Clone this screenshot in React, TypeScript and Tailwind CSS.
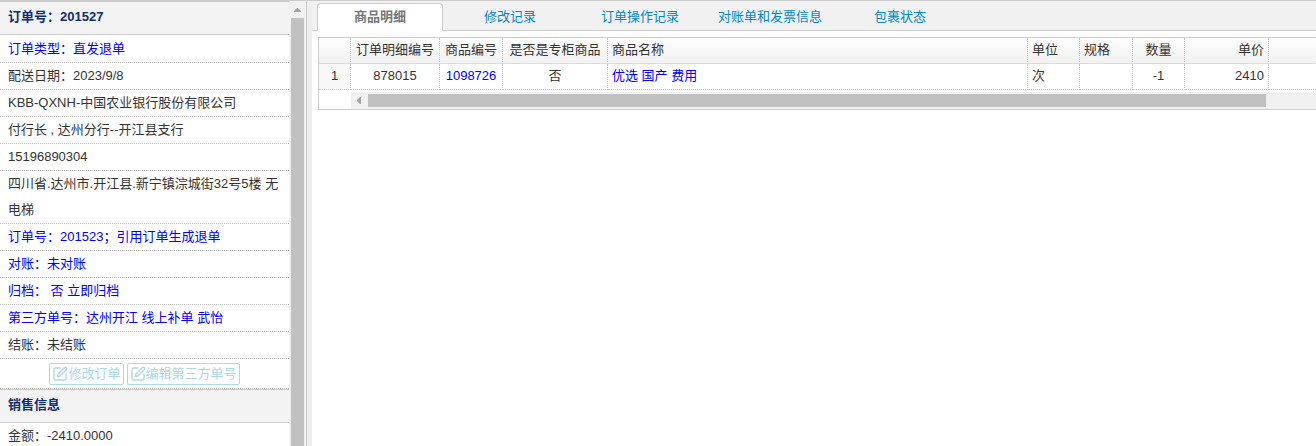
import type { ReactNode } from "react";
import { SquarePen } from "lucide-react";

interface InfoRow {
    text: string;
    link?: boolean;
}

interface OrderItem {
    id: string;
    productCode: string;
    counter: string;
    name: string;
    unit: string;
    spec: string;
    quantity: number;
    price: number;
}

const infoRows: InfoRow[] = [
    { text: "订单类型：直发退单", link: true },
    { text: "配送日期：2023/9/8" },
    { text: "KBB-QXNH-中国农业银行股份有限公司" },
    { text: "付行长 , 达州分行--开江县支行" },
    { text: "15196890304" },
    { text: "四川省.达州市.开江县.新宁镇淙城街32号5楼 无电梯" },
    { text: "订单号：201523；引用订单生成退单", link: true },
    { text: "对账：未对账", link: true },
    { text: "归档： 否 立即归档", link: true },
    { text: "第三方单号：达州开江 线上补单 武怡", link: true },
    { text: "结账：未结账" },
];

const tabs = ["商品明细", "修改记录", "订单操作记录", "对账单和发票信息", "包裹状态"];

const items: OrderItem[] = [
    {
        id: "878015",
        productCode: "1098726",
        counter: "否",
        name: "优选 国产 费用",
        unit: "次",
        spec: "",
        quantity: -1,
        price: 2410,
    },
];

const PanelTitle = ({ children }: { children: ReactNode }) => (
    <h2 className="border-y border-[#ccc] bg-[#f3f3f3] px-2 pt-px pb-[3px] font-bold leading-7 text-[#0e2d70]">
        {children}
    </h2>
);

const ActionButton = ({ children }: { children: ReactNode }) => (
    <button
        type="button"
        className="flex h-[22px] items-center rounded-xs border border-[#add8e6] px-0.5 text-[#add8e6]"
    >
        <SquarePen size={16} strokeWidth={2} />
        {children}
    </button>
);

const OrderPanel = () => (
    <aside className="flex w-[307px] shrink-0 border-r border-[#ccc]">
        <div className="min-w-0 flex-1">
            <PanelTitle>订单号：201527</PanelTitle>
            <div className="pt-px">
                {infoRows.map((row) => (
                    <div key={row.text} className="border-b border-dotted border-[#bbb] px-2 leading-[26px]">
                        {row.link ? (
                            <a href="#" className="text-[#00f]">{row.text}</a>
                        ) : (
                            <span>{row.text}</span>
                        )}
                    </div>
                ))}
            </div>
            <div className="flex justify-center gap-[3px] border-b border-dotted border-[#bbb] pt-1 pb-[3px]">
                <ActionButton>修改订单</ActionButton>
                <ActionButton>编辑第三方单号</ActionButton>
            </div>
            <PanelTitle>销售信息</PanelTitle>
            <div className="border-b border-dotted border-[#bbb] px-2 leading-[26px]">金额：-2410.0000</div>
        </div>

        {/* Scrollbar */}
        <div className="flex w-[17px] shrink-0 flex-col items-center bg-[#f1f1f1]">
            <svg width="17" height="17" viewBox="0 0 17 17" className="shrink-0">
                <path d="M5 11h7v-1L9 7H8L5 10z" fill="#a3a3a3" />
            </svg>
            <div className="w-[13px] flex-1 bg-[#c1c1c1]" />
        </div>
    </aside>
);

const OrderTabs = () => (
    <div className="flex gap-1 border-b border-[#ccc] bg-[#f1f1f1] pt-0.5 pl-[5px]" role="tablist">
        {tabs.map((tab, index) => (
            <button
                key={tab}
                type="button"
                role="tab"
                aria-selected={index === 0}
                className={
                    index === 0
                        ? "-mb-px w-[126px] rounded-t border border-b-0 border-[#ccc] bg-white pb-px leading-[26px] font-bold text-[#777]"
                        : "w-[126px] leading-[26px] text-[#08c]"
                }
            >
                {tab}
            </button>
        ))}
    </div>
);

const cell = "border-r border-b border-dotted border-[#ccc] px-1 pb-px font-normal whitespace-nowrap";
const headCell = "border-r border-r-[#ccc] border-b border-b-[#ddd] [border-right-style:dotted] px-1 pb-px font-normal whitespace-nowrap";

const ItemsTable = () => (
    <div className="mt-1.5 ml-1.5 border border-r-0 border-[#ccc]">
        <table className="w-full table-fixed border-separate border-spacing-0 leading-6">
            <colgroup>
                <col className="w-8" />
                <col className="w-[89px]" />
                <col className="w-[63px]" />
                <col className="w-[105px]" />
                <col />
                <col className="w-[52px]" />
                <col className="w-[53px]" />
                <col className="w-[52px]" />
                <col className="w-[84px]" />
                <col className="w-[47px]" />
            </colgroup>
            <thead className="bg-linear-to-b from-[#fdfdfd] to-[#f1f1f1]">
                <tr>
                    <th scope="col" className={headCell}></th>
                    <th scope="col" className={headCell}>订单明细编号</th>
                    <th scope="col" className={headCell}>商品编号</th>
                    <th scope="col" className={headCell}>是否是专柜商品</th>
                    <th scope="col" className={`${headCell} text-left`}>商品名称</th>
                    <th scope="col" className={`${headCell} text-left`}>单位</th>
                    <th scope="col" className={`${headCell} text-left`}>规格</th>
                    <th scope="col" className={headCell}>数量</th>
                    <th scope="col" className={`${headCell} text-right`}>单价</th>
                    <th scope="col" className="border-b border-[#ddd]"></th>
                </tr>
            </thead>
            <tbody>
                {items.map((item, index) => (
                    <tr key={item.id}>
                        <td className={`${cell} bg-[#f8f8f8] text-center`}>{index + 1}</td>
                        <td className={`${cell} text-center`}>{item.id}</td>
                        <td className={`${cell} text-center`}>
                            <a href="#" className="text-[#00f]">{item.productCode}</a>
                        </td>
                        <td className={`${cell} text-center`}>{item.counter}</td>
                        <td className={cell}>
                            <a href="#" className="text-[#00f]">{item.name}</a>
                        </td>
                        <td className={cell}>{item.unit}</td>
                        <td className={cell}>{item.spec}</td>
                        <td className={`${cell} text-center`}>{item.quantity}</td>
                        <td className={`${cell} text-right`}>{item.price}</td>
                        <td className="border-b border-dotted border-[#ccc]"></td>
                    </tr>
                ))}
            </tbody>
        </table>

        {/* Horizontal scrollbar */}
        <div className="mt-0.5 ml-8 flex h-[17px] items-center bg-[#f1f1f1] pr-[50px]">
            <svg width="17" height="17" viewBox="0 0 17 17" className="shrink-0">
                <path d="M10 5v7H9L6 9V8L9 5z" fill="#a3a3a3" />
            </svg>
            <div className="h-[13px] flex-1 bg-[#c1c1c1]" />
        </div>
    </div>
);

export default function App() {
    return (
        <div className="flex h-screen overflow-hidden border-t border-[#ccc] bg-white font-['Liberation_Sans','Noto_Sans_CJK_SC',sans-serif] text-[13px] text-[#333]">
            <OrderPanel />
            <div className="w-[5px] shrink-0 bg-[#eee]" />
            <main className="min-w-0 flex-1">
                <OrderTabs />
                <ItemsTable />
            </main>
        </div>
    );
}
